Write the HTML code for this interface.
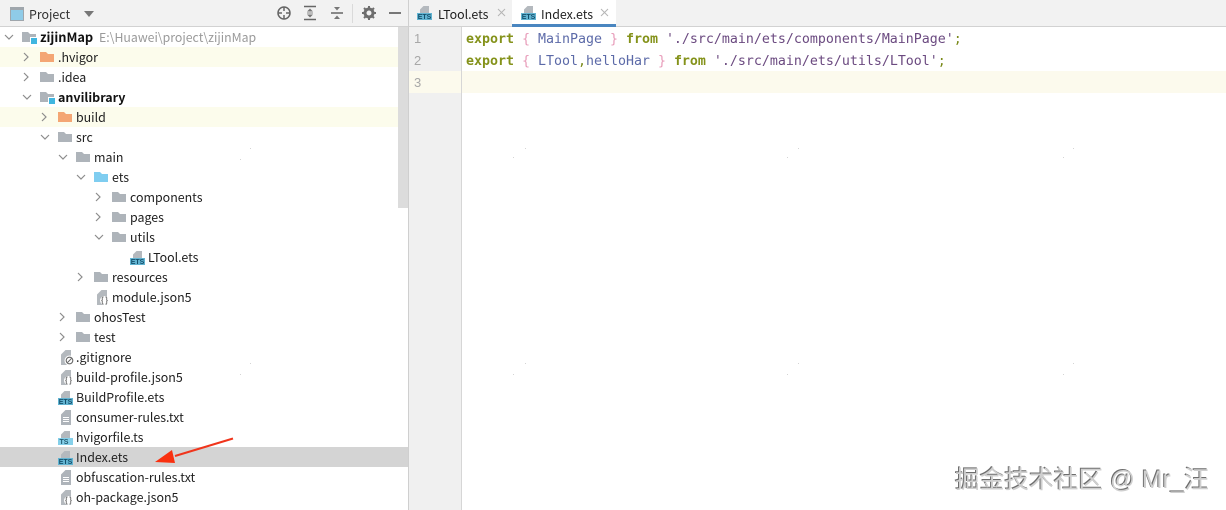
<!DOCTYPE html>
<html><head><meta charset="utf-8">
<style>
html,body{margin:0;padding:0;background:#fff}
#p{position:relative;width:1226px;height:510px;overflow:hidden;background:#fff;font-family:"Noto Sans CJK SC","Liberation Sans",sans-serif;font-size:12.4px;color:#1f1f1f}
#p>*{position:absolute}
.t{white-space:nowrap;line-height:20px;height:20px}
.b{font-weight:700;color:#111}
.i{width:16px;height:16px}
.c{font-family:"DejaVu Sans Mono","Liberation Mono",monospace;font-size:13.3px;line-height:22px;white-space:pre;letter-spacing:-.01px}
.k{color:#84921a;font-weight:700}.br{color:#e79ab8}.n{color:#5c6aa8}.s{color:#6b4a80}.o{color:#7a8a1a}
.g{font-family:"Liberation Sans",sans-serif;font-size:13px;color:#a8a8a8;line-height:22px}
.dot{width:1px;height:1px;background:#d4d4d4}
</style></head><body><div id="p">
<svg width="0" height="0" style="position:absolute"><defs>
<symbol id="r" viewBox="0 0 10 10"><path d="M2 1l4 4-4 4" fill="none" stroke="#8c8c8c" stroke-width="1.2"/></symbol>
<symbol id="d" viewBox="0 0 10 10"><path d="M1 3l4 4 4-4" fill="none" stroke="#8c8c8c" stroke-width="1.2"/></symbol>
<symbol id="f" viewBox="0 0 16 16"><path d="M0 3h6l2 2h6v8H0z" fill="#aeb4ba"/></symbol>
<symbol id="fo" viewBox="0 0 16 16"><path d="M0 3h6l2 2h6v8H0z" fill="#f4a674"/></symbol>
<symbol id="fb" viewBox="0 0 16 16"><path d="M0 3h6l2 2h6v8H0z" fill="#7fcdf0"/></symbol>
<symbol id="m" viewBox="0 0 16 16"><path d="M0 3h6l2 2h6v8H0z" fill="#aeb4ba"/><rect x="8" y="8" width="8" height="8" fill="#fff"/><rect x="9" y="9" width="6" height="6" fill="#40b6e0"/></symbol>
<symbol id="e" viewBox="0 0 16 16"><path d="M6.500 2H12v7H3V5.500z" fill="#b4b9be"/><rect x="0" y="9" width="15" height="7" fill="#62b4d2"/><text x="7.500" y="15.200" font-family="Liberation Sans" font-size="7" font-weight="700" text-anchor="middle" fill="#14506c">ETS</text></symbol>
<symbol id="ts" viewBox="0 0 16 16"><path d="M6.500 2H12v7H3V5.500z" fill="#b4b9be"/><rect x="0" y="9" width="15" height="7" fill="#85d0ea"/><text x="6" y="15.200" font-family="Liberation Sans" font-size="7" font-weight="700" text-anchor="middle" fill="#225a70">TS</text></symbol>
<symbol id="tx" viewBox="0 0 16 16"><path d="M6.500 1H12v15H2V5.500z" fill="#aeb4ba"/><path d="M4 8.500h6M4 10.500h6M4 12.500h6" stroke="#fff" stroke-width="1"/></symbol>
<symbol id="js" viewBox="0 0 16 16"><path d="M6.500 1H12v15H2V5.500z" fill="#b4b9be"/><circle cx="9.500" cy="11.500" r="4.500" fill="#fff"/><path d="M8.500 8q-1.500 0-1.200 1.800T6.300 11.500q1.300 0 1 1.800T8.500 15M10.500 8q1.500 0 1.200 1.800t1 1.700q-1.300 0-1 1.800T10.500 15" fill="none" stroke="#777" stroke-width="1"/></symbol>
<symbol id="gi" viewBox="0 0 16 16"><path d="M6.500 1H12v15H2V5.500z" fill="#b4b9be"/><circle cx="10.500" cy="11.500" r="5" fill="#fff"/><circle cx="10.500" cy="11.500" r="3.300" fill="none" stroke="#666" stroke-width="1.100"/><path d="M8.500 13.500l4-4" stroke="#666"/></symbol>
</defs></svg>

<!-- tool window header -->
<div style="left:0;top:0;width:409px;height:26px;background:#f2f2f2"></div>
<div style="left:0;top:26px;width:409px;height:1px;background:#d2d2d2"></div>
<svg style="left:10px;top:7px" width="14" height="14" viewBox="0 0 14 14"><rect width="14" height="14" fill="#9fa6ac"/><rect x="1" y="3" width="12" height="10" fill="#8fcbe8"/></svg>
<div class="t" style="left:29px;top:4px;color:#333">Project</div>
<svg style="left:84px;top:11px" width="10" height="6"><path d="M0 0h10L5 6z" fill="#777"/></svg>
<svg style="left:276px;top:5px" width="16" height="16" viewBox="0 0 16 16" fill="none" stroke="#666" stroke-width="1.500"><circle cx="8" cy="8" r="6"/><path d="M8 2v4M8 10v4M2 8h4M10 8h4"/></svg>
<svg style="left:303px;top:5px" width="14" height="16" viewBox="0 0 14 16"><path d="M1 1.500h12M1 14.500h12" stroke="#666" stroke-width="1.500"/><path d="M7 3.500l3 3H4zM7 12.500l3-3H4z" fill="#777"/><path d="M4 8h6" stroke="#888"/></svg>
<svg style="left:330px;top:5px" width="14" height="16" viewBox="0 0 14 16"><path d="M1 8h12" stroke="#666" stroke-width="1.500"/><path d="M4 2h6L7 5.500zM4 14h6l-3-3.500z" fill="#777"/></svg>
<div style="left:352px;top:4px;width:1px;height:19px;background:#dadada"></div>
<svg style="left:362px;top:6px" width="14" height="14" viewBox="0 0 14 14"><circle cx="7" cy="7" r="4" fill="none" stroke="#6e6e6e" stroke-width="3"/><path d="M7 0v3M7 11v3M0 7h3M11 7h3M2 2l2 2M10 10l2 2M12 2l-2 2M4 10l-2 2" stroke="#6e6e6e" stroke-width="2"/></svg>
<div style="left:389px;top:12px;width:12px;height:2px;background:#777"></div>

<!-- row backgrounds -->
<div style="left:0;top:47px;width:398px;height:20px;background:#fcfcec"></div>
<div style="left:0;top:107px;width:398px;height:20px;background:#fcfcec"></div>
<div style="left:0;top:447px;width:408px;height:20px;background:#d4d4d4"></div>
<div style="left:398px;top:27px;width:10px;height:181px;background:#dcdcdc"></div>
<div style="left:408px;top:0;width:1px;height:510px;background:#cfcfcf"></div>

<!-- tree chevrons -->
<svg class="i" style="left:4px;top:32px;width:10px;height:10px"><use href="#d"/></svg>
<svg class="i" style="left:22px;top:52px;width:10px;height:10px"><use href="#r"/></svg>
<svg class="i" style="left:22px;top:72px;width:10px;height:10px"><use href="#r"/></svg>
<svg class="i" style="left:22px;top:92px;width:10px;height:10px"><use href="#d"/></svg>
<svg class="i" style="left:40px;top:112px;width:10px;height:10px"><use href="#r"/></svg>
<svg class="i" style="left:40px;top:132px;width:10px;height:10px"><use href="#d"/></svg>
<svg class="i" style="left:58px;top:152px;width:10px;height:10px"><use href="#d"/></svg>
<svg class="i" style="left:76px;top:172px;width:10px;height:10px"><use href="#d"/></svg>
<svg class="i" style="left:94px;top:192px;width:10px;height:10px"><use href="#r"/></svg>
<svg class="i" style="left:94px;top:212px;width:10px;height:10px"><use href="#r"/></svg>
<svg class="i" style="left:94px;top:232px;width:10px;height:10px"><use href="#d"/></svg>
<svg class="i" style="left:76px;top:272px;width:10px;height:10px"><use href="#r"/></svg>
<svg class="i" style="left:58px;top:312px;width:10px;height:10px"><use href="#r"/></svg>
<svg class="i" style="left:58px;top:332px;width:10px;height:10px"><use href="#r"/></svg>

<!-- tree icons -->
<svg class="i" style="left:22px;top:29px"><use href="#m"/></svg>
<svg class="i" style="left:40px;top:49px"><use href="#fo"/></svg>
<svg class="i" style="left:40px;top:69px"><use href="#f"/></svg>
<svg class="i" style="left:40px;top:89px"><use href="#m"/></svg>
<svg class="i" style="left:58px;top:109px"><use href="#fo"/></svg>
<svg class="i" style="left:58px;top:129px"><use href="#f"/></svg>
<svg class="i" style="left:76px;top:149px"><use href="#f"/></svg>
<svg class="i" style="left:94px;top:169px"><use href="#fb"/></svg>
<svg class="i" style="left:112px;top:189px"><use href="#f"/></svg>
<svg class="i" style="left:112px;top:209px"><use href="#f"/></svg>
<svg class="i" style="left:112px;top:229px"><use href="#f"/></svg>
<svg class="i" style="left:130px;top:249px"><use href="#e"/></svg>
<svg class="i" style="left:94px;top:269px"><use href="#f"/></svg>
<svg class="i" style="left:95px;top:289px"><use href="#js"/></svg>
<svg class="i" style="left:76px;top:309px"><use href="#f"/></svg>
<svg class="i" style="left:76px;top:329px"><use href="#f"/></svg>
<svg class="i" style="left:59px;top:349px"><use href="#gi"/></svg>
<svg class="i" style="left:59px;top:369px"><use href="#js"/></svg>
<svg class="i" style="left:58px;top:389px"><use href="#e"/></svg>
<svg class="i" style="left:59px;top:409px"><use href="#tx"/></svg>
<svg class="i" style="left:58px;top:429px"><use href="#ts"/></svg>
<svg class="i" style="left:58px;top:449px"><use href="#e"/></svg>
<svg class="i" style="left:59px;top:469px"><use href="#tx"/></svg>
<svg class="i" style="left:59px;top:489px"><use href="#js"/></svg>

<!-- tree labels -->
<div class="t b" style="left:40px;top:27px;font-size:12.800px">zijinMap</div>
<div class="t" style="left:99px;top:27px;color:#9a9a9a;font-size:12.300px">E:\Huawei\project\zijinMap</div>
<div class="t" style="left:58px;top:47px">.hvigor</div>
<div class="t" style="left:58px;top:67px">.idea</div>
<div class="t b" style="left:58px;top:87px;font-size:12.500px">anvilibrary</div>
<div class="t" style="left:76px;top:107px">build</div>
<div class="t" style="left:76px;top:127px">src</div>
<div class="t" style="left:94px;top:147px">main</div>
<div class="t" style="left:112px;top:167px">ets</div>
<div class="t" style="left:130px;top:187px">components</div>
<div class="t" style="left:130px;top:207px">pages</div>
<div class="t" style="left:130px;top:227px">utils</div>
<div class="t" style="left:148px;top:247px">LTool.ets</div>
<div class="t" style="left:112px;top:267px">resources</div>
<div class="t" style="left:112px;top:287px">module.json5</div>
<div class="t" style="left:94px;top:307px">ohosTest</div>
<div class="t" style="left:94px;top:327px">test</div>
<div class="t" style="left:76px;top:347px">.gitignore</div>
<div class="t" style="left:76px;top:367px">build-profile.json5</div>
<div class="t" style="left:76px;top:387px">BuildProfile.ets</div>
<div class="t" style="left:76px;top:407px">consumer-rules.txt</div>
<div class="t" style="left:76px;top:427px">hvigorfile.ts</div>
<div class="t" style="left:76px;top:447px">Index.ets</div>
<div class="t" style="left:76px;top:467px">obfuscation-rules.txt</div>
<div class="t" style="left:76px;top:487px">oh-package.json5</div>

<!-- arrow -->
<svg style="left:150px;top:435px" width="90" height="32" viewBox="0 0 90 32"><path d="M83 3.500L25 21" stroke="#f0351c" stroke-width="2" fill="none"/><path d="M5 27L22 15l3 13z" fill="#f9300f"/></svg>

<!-- tabs -->
<div style="left:409px;top:0;width:817px;height:26px;background:#f2f2f2"></div>
<div style="left:409px;top:26px;width:817px;height:1px;background:#d2d2d2"></div>
<div style="left:512px;top:0;width:104px;height:24px;background:#fff"></div>
<div style="left:512px;top:24px;width:104px;height:3px;background:#4a86c0"></div>
<svg class="i" style="left:417px;top:4px"><use href="#e"/></svg>
<div class="t" style="left:438px;top:4px">LTool.ets</div>
<svg style="left:497px;top:8px" width="9" height="9"><path d="M1 1l7 7M8 1L1 8" stroke="#b5b5b5"/></svg>
<svg class="i" style="left:521px;top:4px"><use href="#e"/></svg>
<div class="t" style="left:541px;top:4px">Index.ets</div>
<svg style="left:600px;top:8px" width="9" height="9"><path d="M1 1l7 7M8 1L1 8" stroke="#b5b5b5"/></svg>

<!-- editor -->
<div style="left:409px;top:27px;width:52px;height:483px;background:#f0f0f0"></div>
<div style="left:461px;top:27px;width:1px;height:483px;background:#d6d6d6"></div>
<div style="left:409px;top:71px;width:52px;height:22px;background:#fcfaed"></div>
<div style="left:462px;top:71px;width:764px;height:22px;background:#fcfaed"></div>
<div class="g" style="left:414px;top:28px">1</div>
<div class="g" style="left:414px;top:50px">2</div>
<div class="g" style="left:414px;top:72px">3</div>
<div class="c" style="left:466px;top:29px"><span class="k">export</span> <span class="br">{</span> <span class="n">MainPage</span> <span class="br">}</span> <span class="k">from</span> <span class="s">'./src/main/ets/components/MainPage'</span><span class="o">;</span></div>
<div class="c" style="left:466px;top:51px"><span class="k">export</span> <span class="br">{</span> <span class="n">LTool</span><span class="o">,</span><span class="n">helloHar</span> <span class="br">}</span> <span class="k">from</span> <span class="s">'./src/main/ets/utils/LTool'</span><span class="o">;</span></div>

<!-- faint watermark specks -->
<div class="dot" style="left:250px;top:148px"></div><div class="dot" style="left:240px;top:159px"></div>
<div class="dot" style="left:513px;top:157px"></div><div class="dot" style="left:525px;top:148px"></div>
<div class="dot" style="left:787px;top:157px"></div><div class="dot" style="left:798px;top:148px"></div>
<div class="dot" style="left:1063px;top:157px"></div><div class="dot" style="left:1073px;top:148px"></div>
<div class="dot" style="left:250px;top:363px"></div><div class="dot" style="left:240px;top:374px"></div>
<div class="dot" style="left:513px;top:374px"></div><div class="dot" style="left:525px;top:363px"></div>
<div class="dot" style="left:787px;top:374px"></div><div class="dot" style="left:798px;top:363px"></div>
<div class="dot" style="left:1063px;top:374px"></div><div class="dot" style="left:1073px;top:363px"></div>

<!-- watermark -->
<div style="left:955px;top:465px;white-space:nowrap;font-family:'Liberation Sans','Noto Sans CJK SC',sans-serif;font-size:24.700px;line-height:32px;color:#cfcfcf;text-shadow:-1px -1px 0 #6e6e6e,1px 1px 0 #fff">掘金技术社区 @ Mr_汪</div>
</div></body></html>
